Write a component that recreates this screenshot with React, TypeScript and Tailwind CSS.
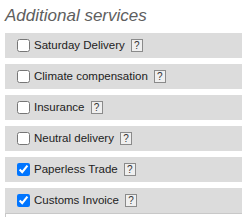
import React from "react";

const items = [
  { label: "Saturday Delivery", checked: false },
  { label: "Climate compensation", checked: false },
  { label: "Insurance", checked: false },
  { label: "Neutral delivery", checked: false },
  { label: "Paperless Trade", checked: true },
  { label: "Customs Invoice", checked: true },
];

export default function App() {
  return (
    <div className="w-[242px] h-[217px] overflow-hidden bg-white pl-[5px] font-['Liberation_Sans',sans-serif]">
      <div className="pt-[6px] h-[33px] text-[17px] italic leading-[19px] text-[#5e5e5e]">
        Additional services
      </div>
      <div className="flex flex-col gap-[6px]">
        {items.map((it) => (
          <label
            key={it.label}
            className="flex h-[25px] items-center bg-[#dcdcdc] pl-[12px] text-[11.5px] text-[#222]"
          >
            <input
              type="checkbox"
              defaultChecked={it.checked}
              className="m-0 mr-[4px] h-[13px] w-[13px]"
            />
            <span>{it.label}</span>
            <span className="ml-[6px] flex h-[13px] w-[12px] items-center justify-center border border-[#8a8a8a] bg-[#efefef] text-[10px] leading-none text-[#333]">
              ?
            </span>
          </label>
        ))}
      </div>
      <div className="h-[20px] border-l border-t border-[#c8c8c8]" />
    </div>
  );
}
